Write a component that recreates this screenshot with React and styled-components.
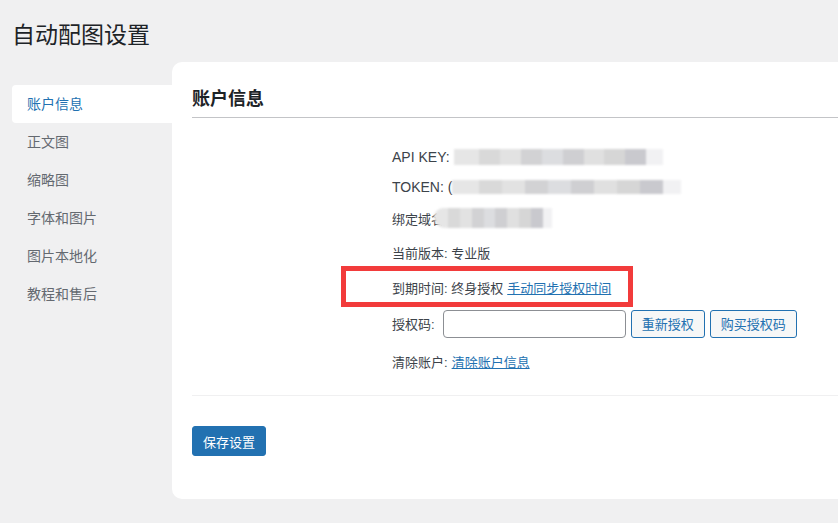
import React from "react";
import styled, { createGlobalStyle } from "styled-components";

const Global = createGlobalStyle`
  html, body {
    margin: 0;
    background: #f0f0f1;
    font-family: "Liberation Sans", "Noto Sans CJK SC", sans-serif;
    color: #3c434a;
    overflow: hidden;
  }
`;

const Page = styled.div`
  width: 838px;
  height: 523px;
  padding-left: 12px;
  box-sizing: border-box;
  overflow: hidden;
`;

const Title = styled.h1`
  margin: 0;
  padding-top: 20px;
  font-size: 23px;
  line-height: 30px;
  font-weight: 400;
  color: #1d2327;
`;

const Body = styled.div`
  display: flex;
  margin-top: 12px;
  width: 1000px;
`;

const Sidebar = styled.ul`
  list-style: none;
  margin: 0;
  padding: 23px 0 0;
  width: 160px;
  flex-shrink: 0;
`;

const Tab = styled.li`
  height: 38px;
  line-height: 38px;
  padding-left: 15px;
  font-size: 14px;
  color: ${(p) => (p.active ? "#2271b1" : "#646970")};
  background: ${(p) => (p.active ? "#fff" : "transparent")};
  border-radius: 4px 0 0 4px;
`;

const Panel = styled.div`
  flex: 1;
  background: #fff;
  border-radius: 10px 0 0 10px;
  padding: 0 20px 43px;
`;

const Header = styled.h2`
  margin: 25px 0 0;
  padding-bottom: 6px;
  font-size: 18px;
  line-height: 24px;
  font-weight: 600;
  color: #1d2327;
  border-bottom: 1px solid #c3c4c7;
`;

const Fields = styled.div`
  padding: 24px 0 16px 200px;
  border-bottom: 1px solid #f0f0f1;
`;

const Row = styled.div`
  position: relative;
  display: flex;
  align-items: center;
  height: ${(p) => p.h}px;
  font-size: 13px;
  white-space: nowrap;
`;

const Latin = styled.span`
  font-size: 14px;
`;

const Blur = styled.span`
  display: inline-block;
  width: ${(p) => p.w}px;
  height: ${(p) => p.hgt || 16}px;
  margin-left: ${(p) => p.ml || 0}px;
  border-radius: ${(p) => (p.round ? "10px 0 0 12px" : "0")};
  background: linear-gradient(
    90deg,
    #e6e6e6 0 12%,
    #d9d9d9 12% 22%,
    #e2e2e2 22% 32%,
    #d2d2d4 32% 42%,
    #dcdde0 42% 52%,
    #cfcfd2 52% 62%,
    #e0e0e0 62% 72%,
    #d6d6d6 72% 82%,
    #c9c9ce 82% 92%,
    #f1f1f3 92% 100%
  );
  filter: blur(1px);
`;

const Link = styled.a`
  color: #2271b1;
  text-decoration: underline;
  margin-left: 4px;
`;

const Highlight = styled.div`
  position: absolute;
  left: -51px;
  top: -4px;
  width: 292px;
  height: 41px;
  border: 5px solid #f23b3b;
  box-sizing: border-box;
  pointer-events: none;
`;

const Input = styled.input`
  width: 183px;
  height: 28px;
  box-sizing: border-box;
  margin-left: 8px;
  border: 1px solid #8c8f94;
  border-radius: 4px;
  background: #fff;
`;

const Button = styled.button`
  height: 28px;
  margin-left: 5px;
  padding: 0 10px;
  border: 1px solid #2271b1;
  border-radius: 3px;
  background: #f6f7f7;
  color: #2271b1;
  font-family: inherit;
  font-size: 13px;
`;

const Primary = styled.button`
  margin-top: 30px;
  height: 30px;
  padding: 0 10px;
  border: 1px solid #2271b1;
  border-radius: 3px;
  background: #2271b1;
  color: #fff;
  font-family: inherit;
  font-size: 13px;
`;

const tabs = ["账户信息", "正文图", "缩略图", "字体和图片", "图片本地化", "教程和售后"];

export default function App() {
  return (
    <Page>
      <Global />
      <Title>自动配图设置</Title>
      <Body>
        <Sidebar>
          {tabs.map((t, i) => (
            <Tab key={t} active={i === 0}>
              {t}
            </Tab>
          ))}
        </Sidebar>
        <Panel>
          <Header>账户信息</Header>
          <Fields>
            <Row h={30}>
              <Latin>API KEY:</Latin>
              <Blur w={209} ml={4} />
            </Row>
            <Row h={30}>
              <Latin>TOKEN: (</Latin>
              <Blur w={229} hgt={14} />
            </Row>
            <Row h={32}>
              绑定域名
              <Blur w={118} hgt={20} ml={-10} round />
            </Row>
            <Row h={36}>当前版本: 专业版</Row>
            <Row h={34}>
              到期时间: 终身授权
              <Link href="#">手动同步授权时间</Link>
              <Highlight />
            </Row>
            <Row h={39}>
              授权码:
              <Input />
              <Button>重新授权</Button>
              <Button>购买授权码</Button>
            </Row>
            <Row h={36}>
              清除账户:
              <Link href="#">清除账户信息</Link>
            </Row>
          </Fields>
          <Primary>保存设置</Primary>
        </Panel>
      </Body>
    </Page>
  );
}
